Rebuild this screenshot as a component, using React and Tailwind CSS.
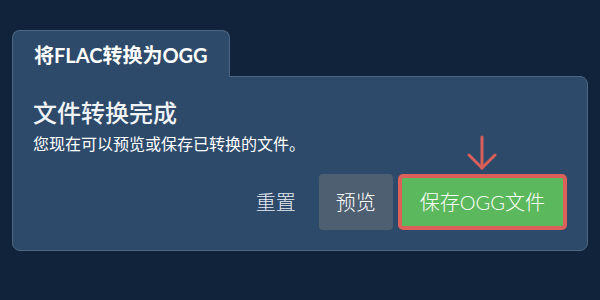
import React from 'react';

const fontStack = { fontFamily: "Lato, 'Noto Sans CJK SC', sans-serif" };

const ArrowDown = () => (
    <svg className="w-[30px] h-[36px]" viewBox="0 0 30 36" fill="none" stroke="#d9605a" strokeWidth={3} strokeLinecap="round" strokeLinejoin="round">
        <path d="M15 2v31" />
        <path d="M2 20l13 13 13-13" />
    </svg>
);

const App = () => {
    return (
        <div className="w-[600px] h-[300px] bg-[#11233a] px-3 pt-[30px]" style={fontStack}>
            {/* tab */}
            <div className="relative z-10 w-[218px] h-[47px] -mb-px bg-[#2d4a6a] border border-b-0 border-[#4d6684] rounded-t-lg px-[21px] pt-[10px]">
                <h2 className="text-[20px] leading-[28px] font-bold text-white whitespace-nowrap">将FLAC转换为OGG</h2>
            </div>

            {/* card */}
            <div className="bg-[#2d4a6a] border border-[#4d6684] rounded-lg rounded-tl-none px-5 pt-5 pb-5">
                <h3 className="text-[24px] leading-[32px] font-medium text-[#f1f4f7]">文件转换完成</h3>
                <p className="mt-[3px] text-[16px] leading-[24px] text-white">您现在可以预览或保存已转换的文件。</p>

                <div className="mt-[18px] flex justify-end items-stretch gap-[5px]">
                    <button className="h-[56px] px-[18px] text-[20px] font-light text-[#e6ebf0] bg-transparent rounded">重置</button>
                    <button className="h-[56px] px-[17px] text-[20px] font-light text-white bg-[#4e5f71] rounded">预览</button>
                    <div className="relative">
                        <div className="absolute bottom-full left-1/2 -translate-x-1/2 mb-[3px]">
                            <ArrowDown />
                        </div>
                        <button className="h-[56px] px-[18px] text-[20px] font-light text-white bg-[#5cb85c] border-4 border-[#dc605a] rounded-[5px] whitespace-nowrap">保存OGG文件</button>
                    </div>
                </div>
            </div>
        </div>
    );
};

export default App;
